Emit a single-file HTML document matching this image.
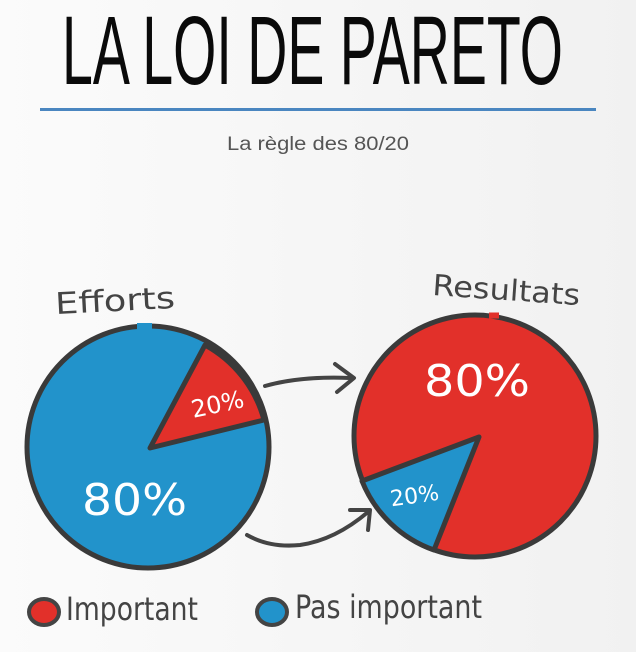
<!DOCTYPE html>
<html><head><meta charset="utf-8"><style>
html,body{margin:0;padding:0;background:#f7f7f7;}
svg{display:block}
</style></head><body>
<svg width="636" height="652" viewBox="0 0 636 652" xmlns="http://www.w3.org/2000/svg">
<defs>
<linearGradient id="bg" x1="0" y1="0" x2="1" y2="0"><stop offset="0" stop-color="#fbfbfb"/><stop offset="1" stop-color="#f1f1f1"/></linearGradient>
</defs>
<rect width="636" height="652" fill="url(#bg)"/>
<text x="62" y="84" font-family="Liberation Sans, sans-serif" font-size="97" fill="#0a0a0a" textLength="501" lengthAdjust="spacingAndGlyphs">LA LOI DE PARETO</text>
<rect x="40" y="108" width="556" height="3" fill="#4a86c0"/>
<text x="318" y="150" text-anchor="middle" font-family="Liberation Sans, sans-serif" font-size="19" fill="#555" textLength="182" lengthAdjust="spacingAndGlyphs">La règle des 80/20</text>

<g font-family="DejaVu Sans, sans-serif" fill="#444">
<text x="55" y="311" font-size="30" textLength="120" lengthAdjust="spacingAndGlyphs" transform="rotate(-3 115 300)">Efforts</text>
<text x="432" y="300" font-size="29" textLength="148" lengthAdjust="spacingAndGlyphs" transform="rotate(4 505 295)">Resultats</text>
</g>

<!-- left pie -->
<circle cx="148" cy="447" r="121" fill="#2293cb" stroke="#3a3a3a" stroke-width="5"/>
<path d="M150 448 L205 345 A121 121 0 0 1 264 420 Z" fill="#2293cb" stroke="none"/>
<path d="M150 448 L205 345 A121 121 0 0 1 264 420 Z" fill="#e2302a" stroke="#3a3a3a" stroke-width="5" stroke-linejoin="round"/>
<rect x="137" y="323" width="15" height="6" fill="#2293cb"/>
<text x="191" y="413" font-family="DejaVu Sans, sans-serif" font-size="24" fill="#fff" transform="rotate(-12 215 405)">20%</text>
<text x="82" y="515" font-family="DejaVu Sans, sans-serif" font-size="44" fill="#fff" textLength="105" lengthAdjust="spacingAndGlyphs">80%</text>

<!-- right pie -->
<circle cx="475" cy="436" r="121" fill="#e2302a" stroke="#3a3a3a" stroke-width="5"/>
<path d="M479 437 L362 481 A121 121 0 0 0 434 550 Z" fill="#2293cb" stroke="#3a3a3a" stroke-width="5" stroke-linejoin="round"/>
<rect x="489" y="312.5" width="10" height="6" fill="#e2302a"/>
<text x="424" y="396" font-family="DejaVu Sans, sans-serif" font-size="44" fill="#fff" textLength="106" lengthAdjust="spacingAndGlyphs">80%</text>
<text x="390" y="503" font-family="DejaVu Sans, sans-serif" font-size="22" fill="#fff" transform="rotate(-8 415 495)">20%</text>

<!-- arrows -->
<g fill="none" stroke="#444" stroke-width="4" stroke-linecap="round" stroke-linejoin="round">
<path d="M265 386 Q300 376 350 378"/>
<path d="M335 364 L354 378 L337 392"/>
<path d="M247 535 Q270 548 300 545 Q335 540 368 512"/>
<path d="M350 510 L370 510 L368 530"/>
</g>

<!-- legend -->
<ellipse cx="44" cy="612" rx="15" ry="13" fill="#e2302a" stroke="#444" stroke-width="4"/>
<text x="66" y="620" font-family="DejaVu Sans, sans-serif" font-size="32" fill="#444" textLength="132" lengthAdjust="spacingAndGlyphs">Important</text>
<ellipse cx="272" cy="612" rx="15" ry="13" fill="#2293cb" stroke="#444" stroke-width="4"/>
<text x="295" y="618" font-family="DejaVu Sans, sans-serif" font-size="32" fill="#444" textLength="187" lengthAdjust="spacingAndGlyphs">Pas important</text>
</svg>
</body></html>
